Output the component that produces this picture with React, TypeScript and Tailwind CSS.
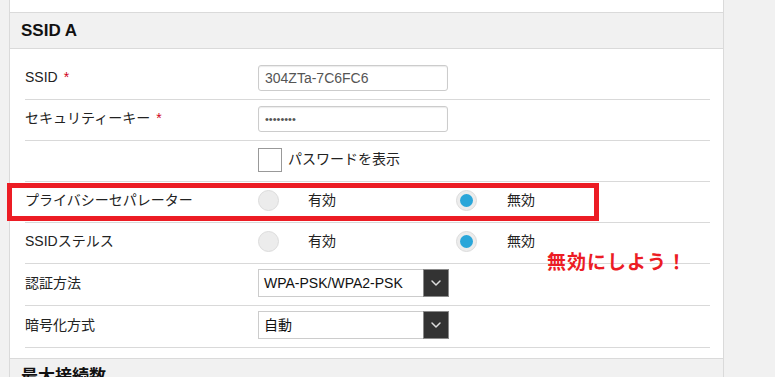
import { ChevronDown } from 'lucide-react'

const font = { fontFamily: '"Liberation Sans", "Noto Sans CJK JP", sans-serif' }

function Row({ label, required, children, tall }: { label?: string; required?: boolean; children?: React.ReactNode; tall?: boolean }) {
  return (
    <div className={`flex items-center border-b border-[#d9d9d9] pb-[3px] ${tall ? 'h-[42px]' : 'h-[41px]'}`}>
      <div className="w-[233px] text-[14px] text-[#222]">
        {label}
        {required && <span className="ml-[6px] text-[#d0021b]">*</span>}
      </div>
      {children}
    </div>
  )
}

function Radio({ checked }: { checked?: boolean }) {
  return (
    <span className="flex h-[21px] w-[21px] items-center justify-center rounded-full border border-[#dcdcdc] bg-[#ececec]">
      {checked && <span className="h-[13px] w-[13px] rounded-full bg-[#2aa6d9]" />}
    </span>
  )
}

function RadioGroup({ value }: { value: 'on' | 'off' }) {
  return (
    <div className="flex items-center text-[14px] text-[#222]">
      <div className="flex w-[198px] items-center gap-[29px]">
        <Radio checked={value === 'on'} />
        <span>有効</span>
      </div>
      <div className="flex items-center gap-[30px]">
        <Radio checked={value === 'off'} />
        <span>無効</span>
      </div>
    </div>
  )
}

function Select({ text }: { text: string }) {
  return (
    <div className="relative flex h-[28px] w-[191px] items-center border border-[#ccc] bg-white pl-[5px] text-[14px] text-[#111]">
      {text}
      <span className="absolute -right-[1px] -top-[1px] flex h-[28px] w-[26px] items-center justify-center border border-[#8a8a8a] bg-[#333]">
        <ChevronDown size={16} strokeWidth={2.2} className="text-[#ddd]" />
      </span>
    </div>
  )
}

function Header({ title }: { title: string }) {
  return (
    <div className="flex h-[37px] items-center border-y border-[#dadada] bg-[#f1f1f1] pl-[11px] text-[17px] font-bold text-[#111]">
      {title}
    </div>
  )
}

export default function App() {
  return (
    <div className="flex h-[377px] w-[775px] overflow-hidden bg-[#f1f1f1]" style={font}>
      <div className="w-[9px] shrink-0" />
      <div className="relative w-[715px] shrink-0 border-x border-[#dadada] bg-white">
        <div className="h-[12px]" />
        <Header title="SSID A" />
        <div className="pb-[10px] pl-[15px] pr-[13px] pt-[10px]">
          <Row label="SSID" required>
            <input
              readOnly
              value="304ZTa-7C6FC6"
              className="h-[26px] w-[190px] rounded-[3px] border border-[#ccc] px-[6px] text-[14px] text-[#555] shadow-[inset_0_1px_1px_rgba(0,0,0,0.08)] outline-none"
            />
          </Row>
          <Row label="セキュリティーキー" required>
            <input
              readOnly
              type="password"
              value="12345678"
              className="h-[26px] w-[190px] rounded-[3px] border border-[#ccc] px-[6px] text-[11px] text-[#555] shadow-[inset_0_1px_1px_rgba(0,0,0,0.08)] outline-none"
            />
          </Row>
          <Row>
            <div className="flex items-center gap-[6px] text-[14px] text-[#222]">
              <span className="h-[24px] w-[24px] border border-[#999] bg-white" />
              <span>パスワードを表示</span>
            </div>
          </Row>
          <Row label="プライバシーセパレーター">
            <RadioGroup value="off" />
          </Row>
          <Row label="SSIDステルス">
            <RadioGroup value="off" />
          </Row>
          <Row label="認証方法" tall>
            <Select text="WPA-PSK/WPA2-PSK" />
          </Row>
          <Row label="暗号化方式" tall>
            <Select text="自動" />
          </Row>
        </div>
        <Header title="最大接続数" />

        {/* annotation */}
        <div className="absolute left-[-3px] top-[183px] h-[38px] w-[592px] border-[5px] border-[#ec1c24]" />
        <div className="absolute left-[537px] top-[249px] text-[19px] font-bold tracking-[1px] text-[#ec1c24]">無効にしよう！</div>
      </div>
      <div className="flex-1" />
    </div>
  )
}
